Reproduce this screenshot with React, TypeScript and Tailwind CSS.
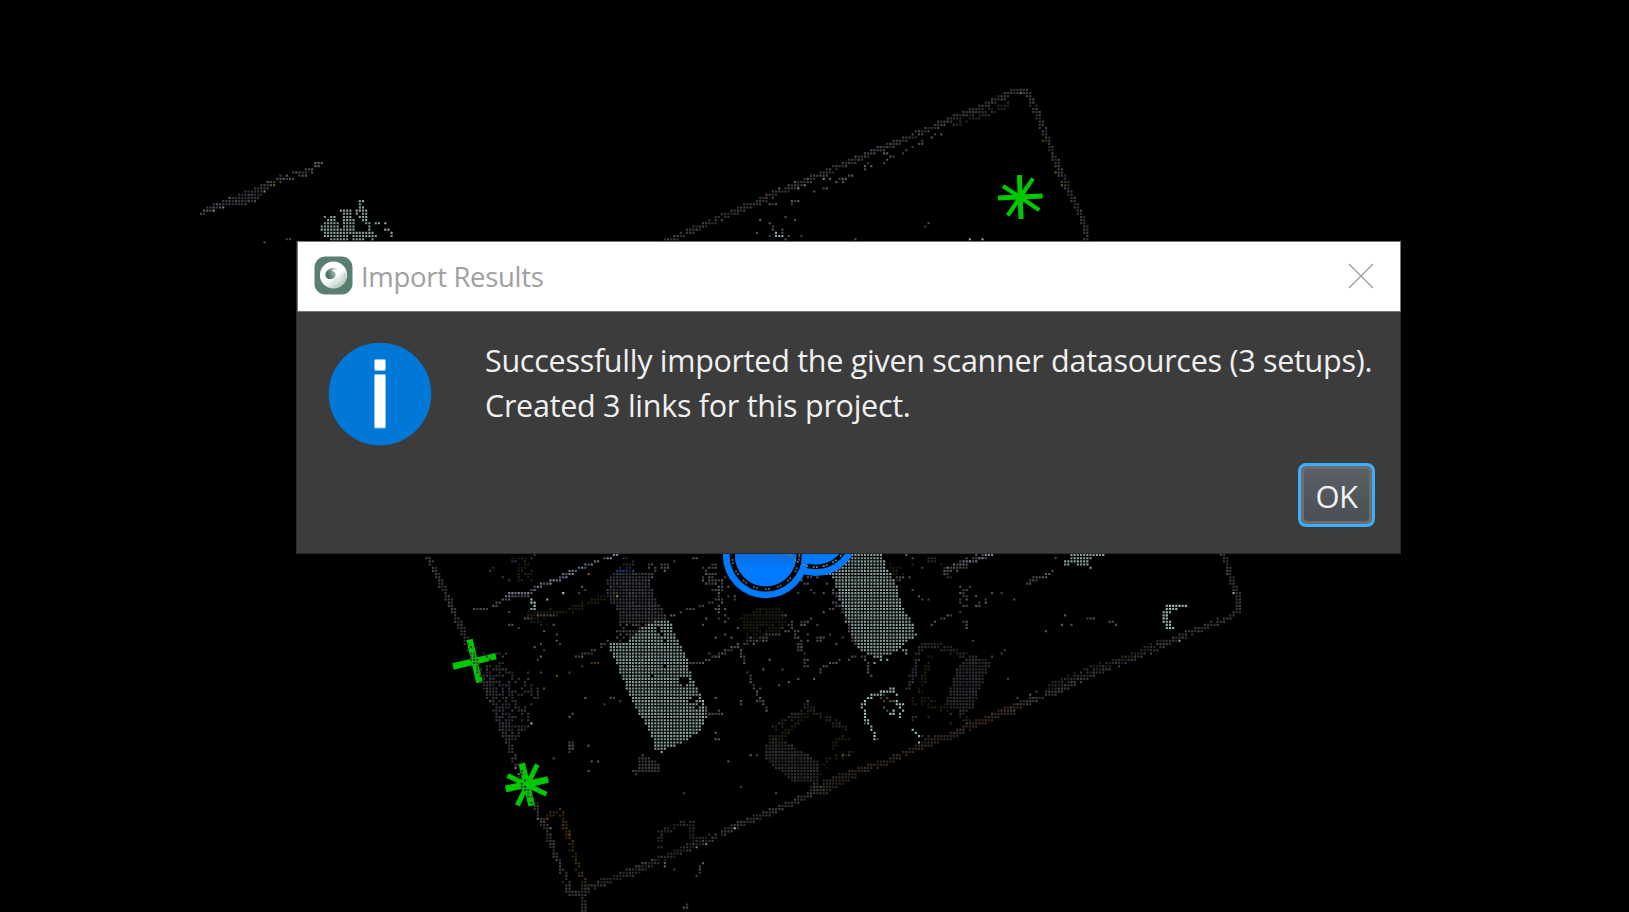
import React from "react";

type Pt = [number, number];

const PITCH = 3.177;

/** Collects scan points on a fixed lattice; a later point replaces an earlier one. */
class Cloud {
  cells = new Map<string, { x: number; y: number; c: string }>();
  seed = 7;
  constructor(private baseX: number, private baseY: number) {}

  rand() {
    this.seed = (this.seed * 1664525 + 1013904223) % 4294967296;
    return this.seed / 4294967296;
  }
  put(i: number, j: number, c: string) {
    this.cells.set(i + ":" + j, { x: this.baseX + i * PITCH, y: this.baseY + j * PITCH, c });
  }
  erase(i: number, j: number) {
    this.cells.delete(i + ":" + j);
  }
  cell(x: number, y: number): Pt {
    return [Math.round((x - this.baseX) / PITCH), Math.round((y - this.baseY) / PITCH)];
  }
  /** Tile with its own origin, measured in thirds of a pixel. */
  tile(ox: number, oy: number) {
    const px = (p: Pt): Pt => [ox + p[0] / 3, oy + p[1] / 3];
    const pick = (cs: string[]) => cs[Math.floor(this.rand() * cs.length)];
    return {
      line: (pts: Pt[], cs: string[], thick = 1, density = 1) => {
        const seen = new Set<string>();
        for (let k = 0; k + 1 < pts.length; k++) {
          const [ax, ay] = px(pts[k]);
          const [bx, by] = px(pts[k + 1]);
          const steep = Math.abs(by - ay) > Math.abs(bx - ax);
          const n = Math.max(1, Math.ceil(Math.max(Math.abs(bx - ax), Math.abs(by - ay)) / 1.6));
          for (let s = 0; s <= n; s++) {
            const [i, j] = this.cell(ax + ((bx - ax) * s) / n, ay + ((by - ay) * s) / n);
            for (let t = 0; t < thick; t++) {
              const ii = steep ? i + t : i;
              const jj = steep ? j : j + t;
              const key = ii + ":" + jj;
              if (seen.has(key)) continue;
              seen.add(key);
              if (this.rand() < density) this.put(ii, jj, pick(cs));
            }
          }
        }
      },
      area: (pts: Pt[], cs: string[], density = 1) => {
        const q = pts.map(px);
        const xs = q.map((p) => p[0]);
        const ys = q.map((p) => p[1]);
        const [i0, j0] = this.cell(Math.min(...xs), Math.min(...ys));
        const [i1, j1] = this.cell(Math.max(...xs), Math.max(...ys));
        for (let j = j0; j <= j1; j++)
          for (let i = i0; i <= i1; i++) {
            const x = this.baseX + i * PITCH;
            const y = this.baseY + j * PITCH;
            let inside = false;
            for (let a = 0, b = q.length - 1; a < q.length; b = a++) {
              if (q[a][1] > y !== q[b][1] > y && x < ((q[b][0] - q[a][0]) * (y - q[a][1])) / (q[b][1] - q[a][1]) + q[a][0]) inside = !inside;
            }
            if (inside && this.rand() < density) this.put(i, j, pick(cs));
          }
      },
      dots: (pts: Pt[], cs: string[]) => {
        pts.forEach((p) => {
          const [i, j] = this.cell(...px(p));
          this.put(i, j, pick(cs));
        });
      },
      holes: (pts: Pt[]) => {
        pts.forEach((p) => {
          const [i, j] = this.cell(...px(p));
          this.erase(i, j);
        });
      },
    };
  }
  paths() {
    const by = new Map<string, string>();
    this.cells.forEach(({ x, y, c }) => {
      by.set(c, (by.get(c) || "") + `M${(x - 0.55).toFixed(2)} ${(y - 0.55).toFixed(2)}h2.1v2.1h-2.1z`);
    });
    return Array.from(by.entries());
  }
}

const wall = ["#3b3938", "#42403e", "#343231", "#484543"];
const dim = ["#2b2928", "#353331", "#262422"];
const gray = ["#4f4d4b", "#423f3e", "#5c5a58"];
const mint = ["#869f9a", "#7e9893", "#8da6a1"];
const pale = ["#a3c2bd", "#8fb0aa"];
const violet = ["#494955", "#5b5b6c", "#3e3e46"];
const lilac = ["#6c6f86", "#80839a", "#53566c"];
const slate = ["#33343d", "#3a3b42", "#2c2d36"];
const olive = ["#1d1f10", "#262415", "#181b0d"];
const brown = ["#3f2b22", "#36271f", "#4a3025"];
const amber = ["#3b2b10", "#30250f", "#493511"];

function buildUpper() {
  const cloud = new Cloud(201, 239.2);
  const a = cloud.tile(180, 140);
  a.line([[72, 211], [230, 145], [270, 126]], violet, 1);
  a.line([[63, 221], [140, 192]], violet, 1, 0.8);
  a.area([[110, 194], [210, 148], [262, 135], [240, 178], [190, 196]], ["#3a3a42", "#4a4a56", "#333338"], 1);
  a.line([[260, 135], [305, 110], [362, 97], [400, 86]], gray, 2, 0.9);
  a.dots([[406, 68], [416, 68], [426, 68], [406, 78], [416, 78]], ["#62626a"]);
  a.dots([[282, 135]], ["#7b5d20"]);
  a.dots([[130, 202], [101, 211], [253, 154]], ["#8a8172"]);
  a.dots([[320, 298], [330, 298]], gray);
  a.dots([[254, 307]], ["#3a5080"]);
  a.area([[420, 262], [445, 232], [470, 230], [478, 262], [488, 258], [488, 206], [516, 206], [516, 236], [526, 245], [526, 275], [584, 272], [590, 290], [580, 296], [430, 290]], mint);
  a.area([[445, 285], [585, 285], [560, 303], [452, 303]], mint, 0.9);
  a.dots([[435, 230], [482, 211], [454, 230], [540, 183], [549, 183], [540, 192], [540, 202], [549, 202], [530, 211], [530, 221], [540, 211], [549, 211], [559, 211], [549, 221], [559, 221], [540, 230], [549, 230], [559, 230], [549, 240], [559, 240], [559, 250], [568, 250], [568, 259], [568, 269], [587, 250], [597, 250], [616, 250], [616, 269], [626, 269], [635, 278], [635, 288], [578, 298]], mint);
  a.holes([[511, 288], [511, 298]]);

  const b = cloud.tile(640, 80);
  b.line([[105, 468], [300, 383], [480, 306], [700, 211], [860, 145], [1000, 87], [1100, 40]], wall, 2, 0.9);
  b.line([[70, 477], [110, 477]], wall, 1);
  b.line([[400, 335], [640, 244], [760, 192]], violet, 1, 0.3);
  b.line([[940, 128], [1020, 100], [1105, 70]], dim, 2, 0.65);
  b.line([[1095, 40], [1125, 30], [1165, 30]], wall, 2, 0.9);
  b.line([[1160, 40], [1225, 195], [1262, 290], [1330, 430], [1336, 475]], wall, 2, 0.95);
  b.dots([[1248, 278], [1267, 316]], ["#80600f"]);
  b.dots([[1210, 183]], ["#59410f"]);
  b.dots([[447, 316], [380, 345]], ["#70452c"]);
  b.dots([[647, 230], [695, 211], [714, 202]], ["#58456b"]);
  b.dots([[1143, 40]], ["#777370"]);
  b.dots([[676, 259], [676, 268], [686, 250], [695, 259], [733, 221], [742, 221], [733, 249], [742, 240], [752, 230], [762, 230], [790, 221], [800, 211], [819, 202], [838, 192], [847, 192], [847, 183], [876, 173], [886, 164], [905, 164], [600, 297], [609, 297], [619, 297], [629, 288], [638, 288], [590, 306], [609, 306], [571, 297], [524, 335], [552, 325], [562, 325]], gray);
  b.dots([[552, 297], [495, 316], [476, 325]], ["#7b8190"]);
  b.dots([[390, 373], [400, 373], [409, 373], [457, 373], [457, 363], [467, 363], [476, 363]], gray);
  b.dots([[361, 420], [438, 411], [467, 420], [390, 430], [400, 440], [352, 458], [400, 449], [428, 449], [447, 468], [486, 468], [438, 477], [647, 477], [857, 439], [867, 430], [428, 458], [390, 468]], gray);
  b.dots([[409, 458], [409, 468], [419, 468], [428, 468], [990, 477], [1029, 477]], ["#8ba7b0"]);
  return cloud.paths();
}

function buildLower() {
  const cloud = new Cloud(201, 555);
  const a = cloud.tile(420, 545);
  const b = cloud.tile(700, 545);
  const c = cloud.tile(960, 545);
  const d = cloud.tile(480, 740);

  // left wall
  a.line([[22, 36], [60, 120], [100, 205], [130, 275], [150, 330], [200, 440], [240, 545], [270, 620]], wall, 2, 0.85);
  a.area([[185, 365], [230, 360], [340, 410], [370, 440], [330, 500], [335, 540], [270, 600], [240, 540]], slate, 0.42);
  a.area([[205, 430], [250, 425], [290, 560], [265, 585], [240, 540]], slate, 0.6);
  a.area([[190, 325], [260, 325], [240, 400], [190, 400]], slate, 0.4);
  a.dots([[335, 536]], pale);

  // interior partitions, upper left
  a.line([[165, 193], [205, 188], [260, 164], [320, 150]], gray, 1, 0.85);
  a.line([[258, 150], [330, 140], [360, 122], [430, 98], [500, 62], [560, 40], [600, 30]], lilac, 1, 0.9);
  a.line([[258, 154], [330, 144], [440, 86], [530, 50]], lilac, 1, 0.4);
  a.line([[330, 205], [400, 205], [480, 180], [560, 148], [620, 140]], olive, 2, 0.6);
  a.area([[320, 200], [400, 190], [385, 250], [330, 235]], olive, 0.6);
  a.area([[270, 40], [330, 30], [340, 110], [290, 110]], olive, 0.5);
  a.dots([[335, 164], [335, 173], [345, 173], [345, 183], [335, 192], [345, 192], [383, 164], [430, 145]], pale);
  a.dots([[507, 88]], ["#8a5220"]);
  a.area([[200, 60], [290, 30], [360, 30], [240, 140]], slate, 0.1);
  a.area([[420, 150], [540, 90], [540, 130], [440, 200]], gray, 0.05);
  a.line([[270, 240], [335, 215], [400, 210]], gray, 1, 0.7);
  a.dots([[297, 249], [268, 202], [400, 240], [372, 259], [411, 268], [411, 288], [420, 297], [363, 297], [372, 316], [345, 307], [363, 335], [353, 345], [363, 383], [449, 383], [325, 383], [372, 430], [497, 459], [554, 478], [573, 459], [583, 459], [602, 468], [459, 507], [449, 517], [507, 602], [325, 402]], gray);
  a.line([[470, 335], [520, 318], [565, 288]], gray, 1, 0.9);
  a.dots([[516, 354], [526, 354], [535, 354], [487, 364]], ["#4c3710"]);
  a.dots([[411, 392]], ["#7a4a12"]);
  a.area([[440, 590], [465, 590], [465, 620], [440, 620]], gray, 0.7);

  // upper dark panel
  a.area([[575, 85], [690, 85], [700, 150], [745, 220], [720, 232], [600, 240], [590, 190], [560, 140]], ["#3c3a42", "#45434b", "#37353d"], 1);
  a.area([[555, 95], [600, 85], [615, 190], [575, 190]], slate, 0.45);
  a.line([[580, 88], [595, 78], [635, 78]], ["#283f7c", "#2c3a62"], 1);
  a.area([[610, 35], [650, 50], [640, 85], [600, 70]], ["#1a2440", "#2b2c3c"], 0.5);
  a.dots([[592, 154]], ["#8f9b3c"]);
  a.area([[585, 262], [620, 235], [720, 215], [720, 240], [620, 285], [595, 290]], ["#544a47", "#413c3a"], 0.8);
  a.area([[655, 60], [780, 35], [760, 70], [690, 100]], gray, 0.35);

  // left table surface
  a.area([[568, 293], [620, 290], [660, 250], [690, 238], [705, 225], [750, 225], [768, 280], [800, 330], [815, 400], [850, 470], [862, 510], [840, 560], [780, 598], [726, 618], [704, 612], [700, 580], [665, 520], [625, 445], [600, 380], [570, 320]], mint);
  a.holes([[716, 249], [716, 259], [726, 268], [735, 288], [735, 364], [697, 392], [783, 402], [792, 402], [802, 402], [783, 411], [792, 411], [802, 411], [792, 421], [821, 459], [831, 459], [812, 468], [821, 468], [840, 478], [831, 488], [735, 364]]);
  a.dots([[726, 622]], mint);
  a.dots([[859, 488], [859, 497], [859, 507], [850, 516]], ["#6f6265"]);
  a.line([[868, 507], [910, 507]], gray, 1);
  a.line([[750, 212], [800, 195], [860, 175], [940, 150]], gray, 1, 0.65);
  a.line([[810, 354], [860, 345], [910, 322], [955, 300]], gray, 1, 0.8);
  a.line([[850, 65], [890, 150], [920, 230]], gray, 2, 0.5);
  a.area([[850, 60], [950, 40], [955, 280], [910, 280]], gray, 0.09);
  a.dots([[821, 40], [831, 40], [850, 240], [868, 326], [887, 278], [888, 583], [897, 497]], gray);

  // area under the setup markers
  b.area([[0, 60], [40, 60], [80, 110], [80, 230], [60, 230], [50, 150], [0, 100]], gray, 0.3);
  b.area([[280, 80], [400, 60], [380, 150], [240, 150]], gray, 0.22);
  b.area([[120, 215], [175, 185], [245, 190], [260, 230], [240, 260], [190, 290], [140, 280]], ["#1a1f10", "#20230f", "#151a0c"], 0.9);
  b.area([[240, 195], [310, 230], [290, 255], [240, 255]], gray, 0.5);
  b.line([[140, 285], [240, 265], [310, 235], [400, 185]], gray, 1, 0.75);
  b.line([[0, 354], [60, 330], [120, 300], [200, 285]], gray, 1, 0.8);
  b.line([[115, 300], [150, 395], [170, 440], [200, 495]], gray, 1, 0.8);
  b.line([[280, 250], [300, 320], [318, 365]], gray, 2, 0.55);
  b.line([[355, 383], [370, 364], [430, 345], [470, 330]], gray, 1, 0.7);
  b.dots([[325, 269], [354, 240], [391, 269], [411, 297], [430, 278], [354, 278], [364, 278], [373, 278], [354, 288], [364, 288], [325, 288], [210, 345], [191, 373], [248, 373], [296, 402], [344, 402], [267, 411], [239, 421], [182, 430], [124, 468], [124, 478], [172, 468], [182, 468], [201, 497], [48, 459], [48, 564], [57, 583], [86, 650], [153, 631], [172, 631], [124, 727], [48, 507], [325, 468], [220, 545], [230, 745], [19, 221]], gray);
  b.line([[488, 335], [505, 365], [515, 405]], gray, 1, 0.9);

  // right table surface
  b.area([[400, 100], [350, 75], [400, 60], [440, 28], [548, 28], [562, 70], [590, 120], [610, 190], [632, 220], [650, 268], [625, 290], [600, 292], [600, 315], [560, 330], [530, 345], [500, 325], [480, 322], [460, 275], [440, 240], [425, 190]], mint);
  b.dots([[525, 354], [544, 345], [563, 345], [610, 297], [610, 316], [619, 316], [619, 326]], mint);
  b.area([[390, 130], [405, 130], [475, 310], [465, 310], [420, 200], [395, 170]], ["#4b4352", "#5a5062"], 0.8);
  b.area([[560, 50], [600, 50], [630, 95], [590, 110]], olive, 0.6);
  b.dots([[592, 97], [602, 97], [611, 97], [630, 97], [620, 30], [640, 40], [668, 68], [600, 107], [668, 164], [687, 164], [658, 154], [640, 135]], gray);
  b.line([[640, 45], [700, 35], [740, 60]], dim, 2, 0.45);
  b.line([[740, 75], [765, 62], [820, 48], [870, 30]], lilac, 1, 0.9);
  b.line([[735, 80], [760, 66], [820, 52]], gray, 2, 0.6);
  b.dots([[745, 88], [754, 97], [745, 97]], brown);
  b.area([[760, 95], [810, 130], [800, 190], [770, 180]], gray, 0.16);
  b.dots([[697, 240], [706, 230], [725, 221], [735, 221], [745, 211], [754, 211], [783, 173], [800, 231], [800, 240], [800, 250], [821, 288], [878, 335], [906, 326], [916, 316], [830, 183], [840, 173], [858, 164], [858, 173], [878, 145], [945, 164], [925, 402], [983, 116], [954, 459]], gray);

  // chair outlines, right
  b.line([[655, 300], [720, 300], [790, 325], [865, 350]], dim, 2, 0.9);
  b.line([[655, 310], [640, 370], [620, 430]], slate, 2, 0.85);
  b.line([[690, 335], [665, 400], [660, 440]], olive, 2, 0.65);
  b.line([[640, 460], [700, 465], [740, 480]], olive, 3, 0.7);
  b.area([[800, 340], [870, 350], [845, 420], [820, 490], [790, 505], [735, 480], [755, 420], [775, 360]], ["#303036", "#36363c", "#2b2b30"]);
  b.line([[780, 510], [800, 545]], dim, 3, 0.8);
  b.dots([[640, 516], [650, 516], [640, 526], [754, 507], [754, 535], [687, 516]], dim);

  // round stool
  b.line([[580, 435], [540, 445], [500, 460], [488, 475], [495, 520], [515, 550], [525, 580]], pale, 1);
  b.dots([[488, 478], [498, 478], [488, 488], [573, 430], [583, 440], [573, 440], [592, 450], [592, 468], [592, 478], [602, 478], [610, 478], [602, 488], [611, 497], [583, 497], [583, 507], [602, 507], [602, 516], [573, 507], [640, 555], [650, 564], [658, 574], [658, 592]], pale);
  b.dots([[544, 459], [563, 459], [554, 468], [583, 468], [554, 488], [563, 497], [554, 450], [535, 583], [495, 535]], gray);
  b.dots([[573, 468]], ["#6b5a10"]);
  b.dots([[0, 454], [10, 468], [10, 478], [10, 488], [0, 526], [10, 516], [0, 545]], pale);

  // chair outlines, centre
  b.area([[325, 470], [440, 545], [440, 560], [400, 545], [325, 500], [215, 570], [210, 550], [280, 500]], dim, 0.75);
  b.line([[205, 570], [240, 575], [300, 520], [325, 500]], olive, 2, 0.85);
  b.area([[215, 580], [250, 585], [355, 650], [355, 710], [280, 710], [190, 640], [190, 612]], ["#33302f", "#2d2b2a", "#3a3737"], 1);
  b.line([[430, 570], [445, 620], [380, 640], [360, 690]], olive, 2, 0.6);
  b.line([[410, 580], [390, 620]], olive, 2, 0.6);

  // lower boundary
  b.line([[335, 725], [440, 685], [560, 645], [660, 600], [770, 560], [900, 500], [985, 465]], ["#382e29", "#352822", "#3f2f27"], 2, 0.9);
  b.area([[335, 715], [380, 715], [390, 745], [335, 745]], wall, 0.8);
  b.line([[670, 572], [750, 570], [800, 545]], ["#3a302b", "#332b28"], 2, 0.8);
  b.dots([[382, 735]], pale);
  c.line([[10, 545], [90, 515], [180, 475], [300, 430], [400, 380], [520, 335], [610, 295], [700, 255], [800, 215], [838, 195]], wall, 2, 0.9);
  c.line([[0, 555], [90, 515], [170, 490]], brown, 2, 0.8);
  c.line([[270, 420], [330, 393], [400, 365], [520, 330], [610, 280]], dim, 2, 0.7);
  c.line([[785, 30], [805, 90], [828, 150], [834, 200]], wall, 2, 0.95);
  c.dots([[659, 288], [821, 145]], ["#8ba2a4"]);
  c.dots([[497, 354]], ["#303b6d"]);
  c.area([[330, 26], [400, 26], [385, 65], [350, 60], [330, 50]], mint);
  c.line([[400, 30], [432, 30]], mint, 1);
  c.dots([[316, 50], [325, 50], [316, 59], [325, 59], [392, 68]], mint);
  c.dots([[288, 40]], ["#34427d"]);
  c.line([[620, 183], [680, 183]], pale, 1);
  c.dots([[621, 193], [630, 193], [640, 193], [650, 193], [611, 202], [621, 202], [630, 202], [611, 212], [621, 212], [611, 221], [621, 221], [611, 231], [621, 231], [630, 231], [621, 240], [630, 240], [621, 250], [630, 250], [640, 250]], pale);
  c.line([[0, 58], [50, 40], [100, 30]], lilac, 1, 0.9);
  c.line([[0, 50], [40, 36], [70, 30]], gray, 1, 0.8);
  c.line([[202, 116], [220, 98], [250, 98], [278, 78]], gray, 1);
  c.dots([[230, 107], [126, 145], [164, 164], [50, 154], [59, 183], [78, 164], [78, 174], [12, 145], [12, 154], [21, 164], [21, 183], [31, 126], [2, 126], [2, 202], [12, 231], [21, 231], [21, 240], [21, 250], [40, 288], [135, 316], [126, 326], [97, 335], [145, 402], [316, 212], [307, 240], [335, 240], [259, 259], [383, 221], [393, 221], [402, 221], [450, 231], [460, 231], [469, 240], [230, 440], [212, 450], [173, 459]], gray);

  // bottom corner
  d.line([[80, 5], [100, 60], [125, 130], [160, 190], [195, 270], [235, 370], [258, 440], [275, 455]], wall, 2, 0.85);
  d.line([[280, 458], [350, 432], [460, 385], [550, 348], [690, 295], [760, 255], [880, 208], [1000, 155], [1030, 135]], wall, 2, 0.95);
  d.line([[350, 425], [460, 393], [560, 345], [690, 285]], dim, 2, 0.8);
  d.line([[1040, 140], [1090, 118], [1140, 92]], ["#302b20", "#29271e"], 2, 0.9);
  d.line([[200, 225], [230, 208], [260, 285], [284, 370], [312, 430]], amber, 2, 0.8);
  d.dots([[268, 285], [205, 237]], ["#80500c"]);
  d.dots([[107, 85], [117, 104], [174, 237], [212, 266]], ["#77706c"]);
  d.line([[308, 440], [308, 513]], wall, 2, 0.8);
  d.line([[535, 320], [540, 275], [600, 248], [628, 250], [636, 295]], dim, 2, 0.8);
  d.dots([[766, 266]], pale);
  d.dots([[680, 313], [650, 323]], ["#77757c"]);
  d.area([[475, 55], [490, 42], [525, 60], [548, 88], [535, 100], [475, 100]], ["#3c3a3a", "#454242"], 1);
  d.dots([[469, 104], [459, 94], [469, 94], [326, 18], [221, 56], [335, 66], [355, 66], [326, 94], [612, 161], [783, 142], [745, 66], [812, 47], [831, 47], [888, 161], [583, 390], [669, 370], [659, 380], [659, 390], [659, 399], [650, 409], [555, 370], [555, 380], [621, 494], [621, 503], [612, 503], [268, 37], [717, 0], [1089, 47], [1108, 47]], gray);
  d.area([[260, 5], [282, 5], [280, 30], [265, 30]], gray, 0.7);
  return cloud.paths();
}

const UPPER = buildUpper();
const LOWER = buildLower();

function ScanView() {
  return (
    <svg className="absolute inset-0" width="1629" height="912" viewBox="0 0 1629 912" aria-hidden="true">
      <defs>
        <linearGradient id="setup" x1="0" y1="0" x2="0" y2="1">
          <stop offset="0.5" stopColor="#0a6fe6" />
          <stop offset="0.72" stopColor="#007bff" />
        </linearGradient>
      </defs>
      <g stroke="#00c800" fill="none">
        <path strokeWidth="5" d="M1019.400 175l1.600 44M998 198l44.600-2" />
        <path strokeWidth="4.200" d="M1033 178.500l-25.300 37M1003 186l36.300 24" />
        <path strokeWidth="6.500" d="M469.500 639.400l10 43M453 666.500l43-10.300" />
        <path strokeWidth="6.700" d="M521.700 763.300l10 42.500M505.700 789l42.500-9.500" />
        <path strokeWidth="5" d="M537.300 764.500l-20 40.800M507.500 775.500l39 18.800" />
        <circle cx="1020.300" cy="197.300" r="4.500" fill="#00c800" />
        <circle cx="527" cy="784.500" r="5.500" fill="#00c800" />
      </g>
      {UPPER.map(([c, d]) => (
        <path key={c} d={d} fill={c} transform="translate(-0.5 -0.5)" />
      ))}
      {LOWER.map(([c, d]) => (
        <path key={c} d={d} fill={c} transform="translate(-0.5 -0.5)" />
      ))}
      <g>
        <circle cx="815.700" cy="533.500" r="42.500" fill="#007bff" />
        <circle cx="815.700" cy="533.500" r="33.500" fill="none" stroke="#04070c" strokeWidth="4.500" />
        <circle cx="815.700" cy="533.500" r="30" fill="url(#setup)" />
        <circle cx="765.700" cy="555.500" r="42.800" fill="#007bff" />
        <circle cx="765.700" cy="555.500" r="33.400" fill="none" stroke="#020406" strokeWidth="5.400" />
        <circle cx="765.700" cy="555.500" r="30.500" fill="url(#setup)" />
        <path d="M779 555l8 9M786 554l8 5" stroke="#2c6fc0" strokeWidth="1.500" strokeDasharray="2 1.200" />
        <circle cx="765.700" cy="555.500" r="33.600" fill="none" stroke="#5b6269" strokeWidth="1.800" strokeDasharray="1.900 1.300 1.900 7" />
        <circle cx="815.700" cy="533.500" r="33.600" fill="none" stroke="#6f8583" strokeWidth="1.600" strokeDasharray="1.900 1.300 1.900 5" />
      </g>
    </svg>
  );
}

function AppLogo() {
  return (
    <svg width="39" height="39" viewBox="0 0 39 39" className="shrink-0" aria-hidden="true">
      <defs>
        <linearGradient id="shell" x1="0.1" y1="0" x2="0.8" y2="1">
          <stop offset="0.550" stopColor="#ffffff" />
          <stop offset="1" stopColor="#a9bcb2" />
        </linearGradient>
        <linearGradient id="swirl" x1="0" y1="0.600" x2="1" y2="0.300">
          <stop offset="0.200" stopColor="#4f7565" />
          <stop offset="1" stopColor="#dfe7e3" />
        </linearGradient>
      </defs>
      <rect x="0.500" y="0.500" width="38" height="38" rx="11" fill="#5a7f70" />
      <circle cx="19.500" cy="19" r="13.600" fill="url(#shell)" />
      <path d="M22 30.500c6-1.500 9.500-7 8.500-13" fill="none" stroke="#c3d1c9" strokeWidth="1.600" strokeLinecap="round" />
      <path d="M21 27.500c4-1 6.800-4.500 6.500-8.500" fill="none" stroke="#dbe4df" strokeWidth="1.300" strokeLinecap="round" />
      <path d="M25.500 14.500c-3.500-4.300-11.500-3-13.800 2.200-1.500 4.300 2 7 5.800 6.300 4-.8 5.300-4.500 3.400-6.800-1-1.200-2.300-1.500-3.700-1.200 2.500-2.100 6-2.300 8.300-.5z" fill="url(#swirl)" />
    </svg>
  );
}

function InfoBadge() {
  return (
    <svg width="104" height="104" viewBox="0 0 104 104" className="shrink-0" aria-hidden="true">
      <circle cx="52" cy="52" r="51.300" fill="#0078d7" />
      <g stroke="#8cc3ee" strokeWidth="1" fill="#fff">
        <rect x="46.500" y="17.500" width="11" height="11" rx="1.500" />
        <rect x="46.500" y="32.500" width="11" height="53.500" rx="0.500" />
      </g>
    </svg>
  );
}

export default function App() {
  return (
    <main className="relative h-[912px] w-[1629px] overflow-hidden bg-black pl-[296px] pt-[241px] font-['Open_Sans','Noto_Sans',sans-serif]">
      <ScanView />
      <section role="dialog" aria-label="Import Results" className="relative flex h-[313px] w-[1105px] flex-col border border-[#2b2b2b] bg-[#3c3c3c]">
        <header className="-mt-px mr-[-1px] flex h-[71px] shrink-0 items-start border border-[#777777] bg-white pl-[16px] pr-[26px] pt-[14px]">
          <AppLogo />
          <h1 className="ml-[8px] mt-[7px] flex-1 whitespace-nowrap text-[27.5px] leading-none tracking-[-0.32px] text-[#a0a0a0]">Import Results</h1>
          <button type="button" aria-label="Close" className="mt-[7px] flex">
            <svg width="26" height="26" viewBox="0 0 26 26" fill="none" stroke="#a0a0a0" strokeWidth="1.400">
              <path d="M1 1l24 24M25 1L1 25" />
            </svg>
          </button>
        </header>
        <div className="flex pl-[31px] pt-[30px]">
          <InfoBadge />
          <p className="ml-[53px] -mt-[4px] whitespace-nowrap text-[30.5px] leading-[44.500px] tracking-[-0.28px] text-[#f0f0f0]">
            Successfully imported the given scanner datasources (3 setups).
            <br />
            Created 3 links for this project.
          </p>
        </div>
        <footer className="mt-[17px] flex justify-end pr-[25px]">
          <button type="button" className="flex h-[64px] w-[77px] items-center justify-center rounded-[8px] border-[3px] border-[#3daefe] bg-[#6b6e71] p-[3px]">
            <span className="flex h-full w-full items-center justify-center rounded-[4px] bg-linear-to-b from-[#5a6066] to-[#4a4f55] pt-[2px] text-[31px] leading-none tracking-[-0.5px] text-[#f2f2f2]">OK</span>
          </button>
        </footer>
      </section>
    </main>
  );
}
